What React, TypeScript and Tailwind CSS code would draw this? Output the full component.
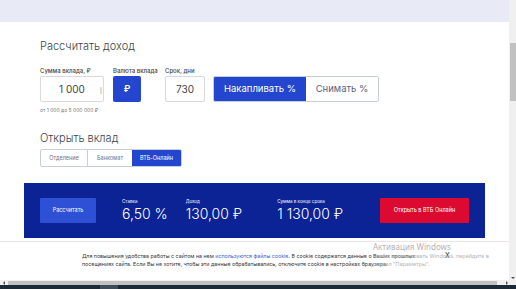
import React from "react";

export default function App() {
  const font = { fontFamily: "Inter, 'Noto Sans', sans-serif" };
  return (
    <div className="w-[516px] h-[289px] overflow-hidden flex flex-col bg-white relative" style={font}>
      <div className="flex h-[280px]">
        {/* page */}
        <div className="w-[509px] flex flex-col">
          <div className="h-[22px] bg-[#e8ebf5] shrink-0" />
          <div className="pl-[40px] pt-[17px] flex flex-col">
            <div className="text-[11px] leading-[14px] text-[#3a3f4b] font-light">Рассчитать доход</div>
            <div className="flex mt-[14px] gap-[8px]">
              <div className="flex flex-col w-[64px]">
                <div className="text-[6px] leading-[7px] text-[#444] font-medium whitespace-nowrap">Сумма вклада, ₽</div>
                <div className="mt-[2px] h-[26px] border border-[#d6d9e0] rounded-[2px] flex items-center justify-center relative text-[10px] text-[#444]">
                  1 000
                  <span className="absolute right-[1px] top-[7px] text-[9px] text-[#999] font-light">I</span>
                </div>
              </div>
              <div className="flex flex-col w-[44px] ml-[1px]">
                <div className="text-[6px] leading-[7px] text-[#444] font-medium whitespace-nowrap">Валюта вклада</div>
                <div className="mt-[2px] h-[26px] w-[28px] bg-[#2446cf] rounded-[2px] flex items-center justify-center text-white text-[9px] font-semibold">₽</div>
              </div>
              <div className="flex flex-col w-[40px]">
                <div className="text-[6px] leading-[7px] text-[#444] font-medium whitespace-nowrap">Срок, дни</div>
                <div className="mt-[2px] h-[26px] border border-[#d6d9e0] rounded-[2px] flex items-center justify-center text-[10px] text-[#444]">730</div>
              </div>
              <div className="flex flex-col">
                <div className="h-[9px]" />
                <div className="h-[26px] flex border border-[#c9cdd8] rounded-[2px] overflow-hidden">
                  <div className="w-[92px] bg-[#2446cf] text-white text-[9.5px] flex items-center justify-center">Накапливать %</div>
                  <div className="w-[72px] bg-white text-[#5a6380] text-[9.5px] flex items-center justify-center">Снимать %</div>
                </div>
              </div>
            </div>
            <div className="mt-[5px] text-[5px] leading-[6px] text-[#777]">от 1 000 до 5 000 000 ₽</div>
            <div className="mt-[18px] text-[11px] leading-[14px] text-[#3a3f4b] font-light">Открыть вклад</div>
            <div className="mt-[4px] h-[18px] w-[142px] flex border border-[#c9cdd8] rounded-[2px] overflow-hidden text-[5.5px]">
              <div className="w-[47px] flex items-center justify-center text-[#6a7390] border-r border-[#c9cdd8]">Отделение</div>
              <div className="w-[44px] flex items-center justify-center text-[#6a7390]">Банкомат</div>
              <div className="flex-1 flex items-center justify-center bg-[#2446cf] text-white">ВТБ-Онлайн</div>
            </div>
          </div>
          {/* result panel */}
          <div className="mt-[16px] ml-[24px] w-[461px] h-[55px] bg-[#0c2395] flex items-center pl-[16px]">
            <div className="w-[56px] h-[25px] bg-[#2d50d6] rounded-[1px] flex items-center justify-center text-white text-[5.5px]">Рассчитать</div>
            <div className="ml-[26px] flex flex-col text-white">
              <div className="text-[4.5px] leading-[5px]">Ставка</div>
              <div className="text-[14px] leading-[16px] mt-[2px] font-light">6,50 %</div>
            </div>
            <div className="ml-[18px] flex flex-col text-white">
              <div className="text-[4.5px] leading-[5px]">Доход</div>
              <div className="text-[14px] leading-[16px] mt-[2px] font-light">130,00 ₽</div>
            </div>
            <div className="ml-[35px] flex flex-col text-white">
              <div className="text-[4.5px] leading-[5px]">Сумма в конце срока</div>
              <div className="text-[14px] leading-[16px] mt-[2px] font-light">1 130,00 ₽</div>
            </div>
            <div className="ml-auto mr-[16px] w-[89px] h-[25px] bg-[#dc0a30] rounded-[1px] flex items-center justify-center text-white text-[5.5px]">Открыть в ВТБ Онлайн</div>
          </div>
          <div className="mt-[3px] h-px bg-[#f3e3e6]" />
          <div className="mt-[10px] pl-[82px] relative text-[5.3px] leading-[8px] text-[#333] whitespace-nowrap">
            <div>
              Для повышения удобства работы с сайтом на нем <span className="text-[#3d5bd0]">используются файлы cookie</span>. В cookie содержатся данные о Ваших прошлых
            </div>
            <div>посещениях сайта. Если Вы не хотите, чтобы эти данные обрабатывались, отключите cookie в настройках браузера.</div>
            <span className="absolute left-[445px] top-[0px] text-[7px] leading-[8px] text-[#333]">X</span>
          </div>
        </div>
        {/* vertical scrollbar */}
        <div className="w-[7px] bg-[#f0f0f0] flex flex-col">
          <div className="h-[43px]" />
          <div className="h-[58px] bg-[#c1c1c1] ml-[1px]" />
          <div className="flex-1" />
          <div className="h-[4px] flex items-center justify-center">
            <div className="w-0 h-0 border-l-[2px] border-r-[2px] border-t-[2px] border-l-transparent border-r-transparent border-t-[#505050]" />
          </div>
        </div>
      </div>
      {/* horizontal scrollbar */}
      <div className="h-[5px] bg-[#f0f0f0] flex items-center">
        <div className="w-[8px] flex items-center justify-center">
          <div className="w-0 h-0 border-t-[2px] border-b-[2px] border-r-[2px] border-t-transparent border-b-transparent border-r-[#505050]" />
        </div>
        <div className="w-[489px] h-[4px] bg-[#c1c1c1]" />
        <div className="flex-1 flex items-center justify-center">
          <div className="w-0 h-0 border-t-[2px] border-b-[2px] border-l-[2px] border-t-transparent border-b-transparent border-l-[#505050]" />
        </div>
      </div>
      {/* taskbar */}
      <div className="h-[4px] bg-[#1d2a36] flex">
        <div className="w-[100px]" />
        <div className="w-[18px] bg-[#3d4a58]" />
      </div>
      {/* windows watermark */}
      <div className="absolute left-[373px] top-[242px] text-[#b4b4b4] pointer-events-none" style={{ fontFamily: "'Noto Sans', sans-serif" }}>
        <div className="text-[8px] leading-[10px]">Активация Windows</div>
        <div className="text-[5.5px] leading-[8px] mt-[0px]">Чтобы активировать Windows, перейдите в</div>
        <div className="text-[5.5px] leading-[8px]">раздел "Параметры".</div>
      </div>
    </div>
  );
}
